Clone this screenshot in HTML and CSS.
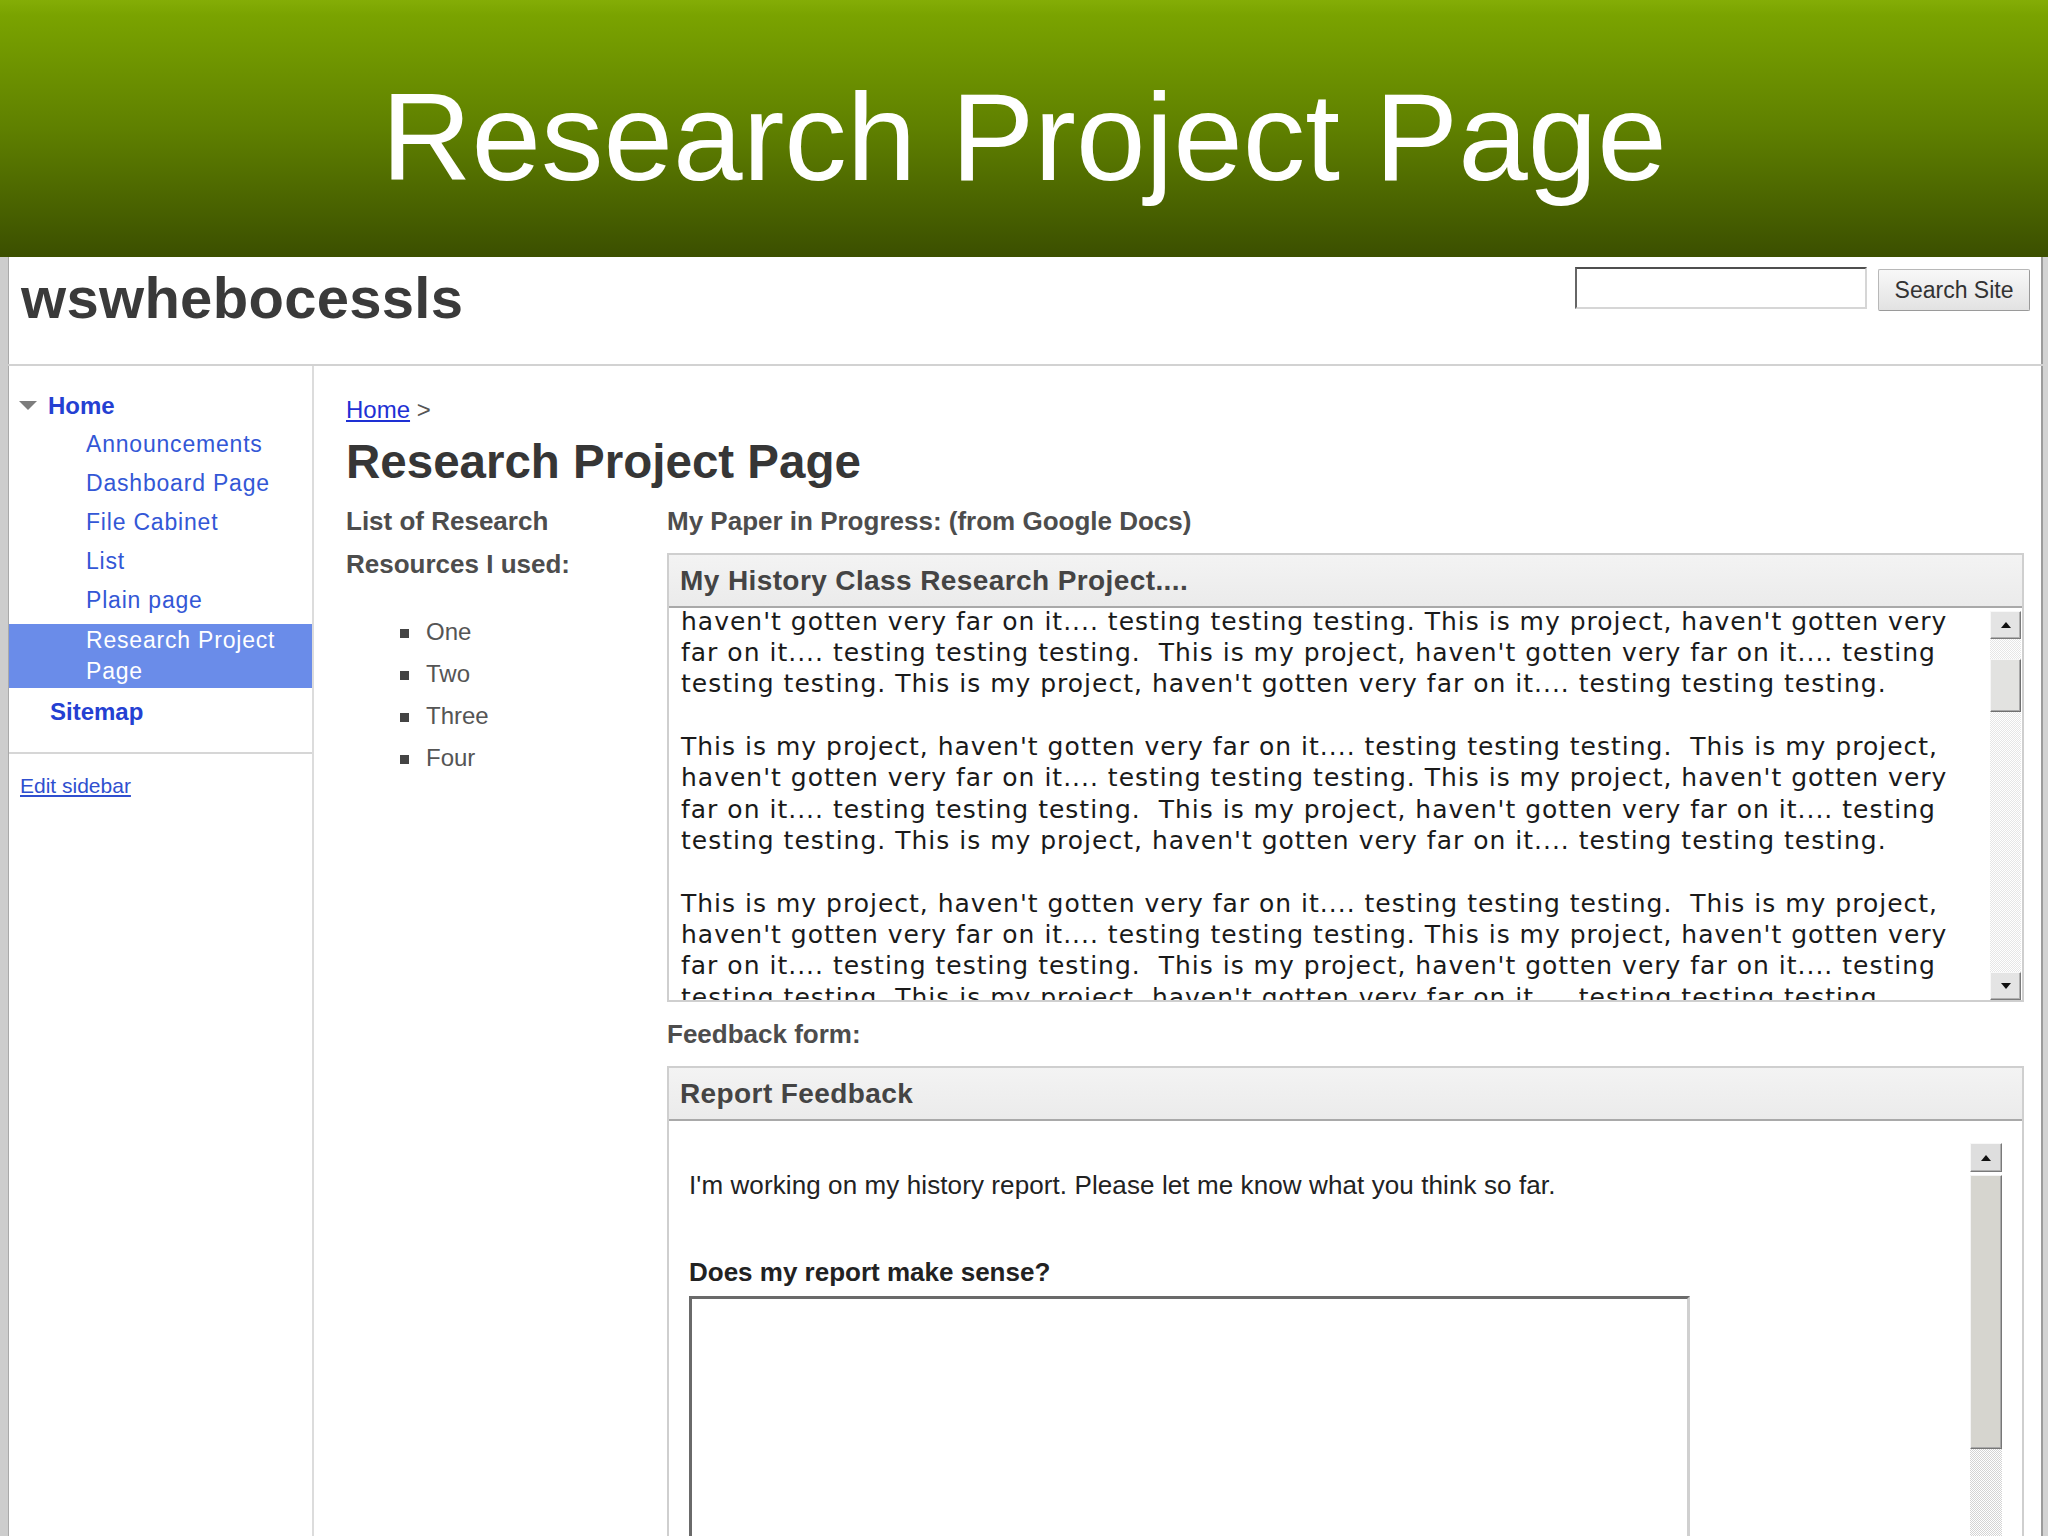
FILE: index.html
```html
<!DOCTYPE html>
<html lang="en">
<head>
<meta charset="utf-8">
<title>Research Project Page</title>
<link rel="stylesheet" href="styles.css">
</head>
<body>
<div class="banner"><h1 class="banner-title">Research Project Page</h1></div>
<div class="frame">
  <header class="site-header">
    <div class="site-title">wswhebocessls</div>
    <div class="search">
      <input class="search-input" type="text" value="">
      <button class="search-btn" type="button">Search Site</button>
    </div>
  </header>
  <div class="columns">
    <aside class="sidebar">
      <ul class="nav">
        <li class="nav-item nav-home"><span class="tri"></span><a class="nav-top">Home</a></li>
        <li class="nav-item nav-sub"><a>Announcements</a></li>
        <li class="nav-item nav-sub"><a>Dashboard Page</a></li>
        <li class="nav-item nav-sub"><a>File Cabinet</a></li>
        <li class="nav-item nav-sub"><a>List</a></li>
        <li class="nav-item nav-sub"><a>Plain page</a></li>
        <li class="nav-item nav-sub nav-current"><a>Research Project<br>Page</a></li>
        <li class="nav-item nav-site"><a class="nav-top">Sitemap</a></li>
      </ul>
      <div class="edit-sidebar"><a>Edit sidebar</a></div>
    </aside>
    <main class="main">
      <div class="crumb"><a class="crumb-link">Home</a> &gt;</div>
      <h2 class="page-title">Research Project Page</h2>
      <div class="content">
        <div class="col-left">
          <p class="label">List of Research Resources I used:</p>
          <ul class="bullets">
            <li>One</li>
            <li>Two</li>
            <li>Three</li>
            <li>Four</li>
          </ul>
        </div>
        <div class="col-right">
          <p class="label">My Paper in Progress: (from Google Docs)</p>
          <div class="gadget">
            <div class="gadget-head">My History Class Research Project....</div>
            <div class="doc-body">
              <div class="doc-view">
                <div class="doc-text">
                  <div class="ln">haven't gotten very far on it.... testing testing testing. This is my project, haven't gotten very</div>
                  <div class="ln">far on it.... testing testing testing.  This is my project, haven't gotten very far on it.... testing</div>
                  <div class="ln">testing testing. This is my project, haven't gotten very far on it.... testing testing testing.</div>
                  <div class="ln"> </div>
                  <div class="ln">This is my project, haven't gotten very far on it.... testing testing testing.  This is my project,</div>
                  <div class="ln">haven't gotten very far on it.... testing testing testing. This is my project, haven't gotten very</div>
                  <div class="ln">far on it.... testing testing testing.  This is my project, haven't gotten very far on it.... testing</div>
                  <div class="ln">testing testing. This is my project, haven't gotten very far on it.... testing testing testing.</div>
                  <div class="ln"> </div>
                  <div class="ln">This is my project, haven't gotten very far on it.... testing testing testing.  This is my project,</div>
                  <div class="ln">haven't gotten very far on it.... testing testing testing. This is my project, haven't gotten very</div>
                  <div class="ln">far on it.... testing testing testing.  This is my project, haven't gotten very far on it.... testing</div>
                  <div class="ln">testing testing. This is my project, haven't gotten very far on it.... testing testing testing.</div>
                </div>
              </div>
              <div class="vscroll doc-scroll">
                <div class="sb-btn"><span class="arrow-up"></span></div>
                <div class="sb-gap doc-gap1"></div>
                <div class="sb-thumb doc-thumb"></div>
                <div class="sb-gap sb-fill"></div>
                <div class="sb-btn"><span class="arrow-down"></span></div>
              </div>
            </div>
          </div>
          <p class="label label-fb">Feedback form:</p>
          <div class="gadget gadget-fb">
            <div class="gadget-head">Report Feedback</div>
            <div class="fb-body">
              <div class="fb-content">
                <p class="fb-intro">I'm working on my history report. Please let me know what you think so far.</p>
                <p class="fb-q">Does my report make sense?</p>
                <textarea class="fb-area"></textarea>
              </div>
              <div class="vscroll fb-scroll">
                <div class="sb-btn sb-btn-fb"><span class="arrow-up"></span></div>
                <div class="sb-thumb fb-thumb"></div>
                <div class="sb-gap sb-fill"></div>
              </div>
            </div>
          </div>
        </div>
      </div>
    </main>
  </div>
</div>
</body>
</html>
```
FILE: styles.css
```css
* { box-sizing: border-box; }
html, body {
  margin: 0;
  padding: 0;
  width: 2048px;
  height: 1536px;
  overflow: hidden;
  background: #ffffff;
  font-family: "Liberation Sans", Arial, sans-serif;
}
a { cursor: pointer; }
p { margin: 0; }
ul { margin: 0; padding: 0; list-style: none; }

.banner {
  height: 257px;
  background: linear-gradient(to bottom, #84ad06 0%, #7aa300 6%, #5f8000 50%, #3b4f00 100%);
  padding-top: 74px;
}
.banner-title {
  margin: 0;
  text-align: center;
  color: #ffffff;
  font-weight: normal;
  font-size: 125px;
  line-height: 125px;
  font-family: "Liberation Sans", Arial, sans-serif;
}

.frame {
  height: 1279px;
  overflow: hidden;
  border-left: 8px solid #cdcdcd;
  border-right: 5px solid #d3d3d3;
  box-shadow: inset 1px 0 0 #a9a9a9, inset -2px 0 0 #9c9c9c;
  display: flex;
  flex-direction: column;
}

.site-header {
  height: 109px;
  flex: none;
  border-bottom: 2px solid #d2d2d2;
  display: flex;
  justify-content: space-between;
  align-items: flex-start;
  padding: 8px 13px 0 13px;
}
.site-title {
  font-size: 58px;
  line-height: 66px;
  font-weight: bold;
  letter-spacing: 0.3px;
  color: #3a3a3a;
}
.search {
  display: flex;
  align-items: flex-start;
  gap: 11px;
  padding-top: 2px;
}
.search-input {
  width: 292px;
  height: 42px;
  margin: 0;
  border: 2px solid;
  border-color: #4f4f4f #d6d6d6 #d6d6d6 #666666;
  background: #fff;
}
.search-btn {
  width: 152px;
  height: 42px;
  margin: 2px 0 0 0;
  padding: 0;
  font-family: "Liberation Sans", Arial, sans-serif;
  font-size: 23px;
  color: #333;
  background: linear-gradient(to bottom, #f8f8f8, #e2e2e2);
  border: 1px solid #b8b8b8;
  border-right-color: #9a9a9a;
  border-bottom-color: #9a9a9a;
  border-radius: 2px;
}

.columns {
  flex: 1;
  display: flex;
  min-height: 0;
}

.sidebar {
  width: 305px;
  flex: none;
  border-right: 2px solid #dcdcdc;
  margin-left: 1px;
}
.nav {
  padding: 20px 0 20px 0;
  border-bottom: 2px solid #d6d6d6;
}
.nav-item {
  padding-top: 4px;
  padding-bottom: 4px;
  line-height: 31px;
  font-size: 23px;
}
.nav-item a { color: #3357d6; letter-spacing: 0.8px; }
.nav-item .nav-top { color: #2440d2; font-weight: bold; font-size: 24px; letter-spacing: 0; }
.nav-home { display: flex; align-items: center; padding-left: 10px; }
.tri {
  width: 0;
  height: 0;
  border-left: 9px solid transparent;
  border-right: 9px solid transparent;
  border-top: 9px solid #7d7d7d;
  margin-right: 11px;
}
.nav-sub { padding-left: 77px; }
.nav-current {
  background: #6a8ce9;
  margin: 4px 0;
  padding-top: 1px;
  padding-bottom: 1px;
}
.nav-current a { color: #ffffff; }
.nav-site { padding-left: 41px; }
.edit-sidebar {
  padding: 20px 0 0 11px;
  line-height: 24px;
  font-size: 21px;
}
.edit-sidebar a { color: #2f4fcf; text-decoration: underline; }

.main {
  flex: 1;
  padding: 29px 19px 0 32px;
  min-width: 0;
}
.crumb {
  line-height: 30px;
  font-size: 24px;
  color: #555;
}
.crumb-link { color: #1e30d4; text-decoration: underline; }
.page-title {
  margin: 9px 0 0 0;
  font-size: 47.5px;
  line-height: 56px;
  font-weight: bold;
  color: #363636;
}
.content {
  display: flex;
  margin-top: 10px;
}
.col-left {
  width: 321px;
  flex: none;
}
.col-right {
  flex: 1;
  min-width: 0;
}
.label {
  font-size: 26px;
  line-height: 43px;
  font-weight: bold;
  color: #4d4d4d;
}
.bullets {
  margin-top: 25px;
  padding-left: 54px;
}
.bullets li {
  font-size: 24px;
  line-height: 42px;
  color: #555;
  display: flex;
  align-items: center;
}
.bullets li::before {
  content: "";
  width: 9px;
  height: 9px;
  background: #444;
  margin-right: 17px;
  margin-top: 3px;
}

.gadget {
  margin-top: 10px;
  border: 2px solid #cfcfcf;
  background: #fff;
}
.gadget-head {
  height: 53px;
  line-height: 52px;
  padding-left: 11px;
  background: linear-gradient(to bottom, #f3f3f3, #ebebeb);
  border-bottom: 2px solid #a9a9a9;
  font-size: 28px;
  font-weight: bold;
  letter-spacing: 0.4px;
  color: #444;
}
.doc-body {
  height: 392px;
  display: flex;
}
.doc-view {
  flex: 1;
  overflow: hidden;
  padding-left: 12px;
}
.doc-text {
  margin-top: -2.5px;
  font-family: "DejaVu Sans", Verdana, sans-serif;
  font-size: 25px;
  letter-spacing: 1px;
  line-height: 31.35px;
  color: #1a1a1a;
}
.ln {
  white-space: pre;
  height: 31.35px;
}
.vscroll {
  flex: none;
  display: flex;
  flex-direction: column;
}
.doc-scroll {
  width: 31px;
  margin-right: 1px;
  padding-top: 3px;
}
.sb-btn {
  height: 28px;
  flex: none;
  background: #e4e4e4;
  border: 1px solid;
  border-color: #f8f8f8 #7a7a7a #7a7a7a #f8f8f8;
  box-shadow: inset -1px -1px 0 #b0b0b0;
  display: flex;
  align-items: center;
  justify-content: center;
}
.sb-btn-fb { height: 29px; background: #dedede; }
.arrow-up {
  width: 0; height: 0;
  border-left: 5px solid transparent;
  border-right: 5px solid transparent;
  border-bottom: 6px solid #111;
}
.arrow-down {
  width: 0; height: 0;
  border-left: 5px solid transparent;
  border-right: 5px solid transparent;
  border-top: 6px solid #111;
}
.sb-gap {
  background: repeating-conic-gradient(#e6e6e6 0 25%, #ffffff 0 50%) 0 0 / 2px 2px;
}
.doc-gap1 { height: 20px; flex: none; }
.sb-fill { flex: 1; }
.sb-thumb {
  flex: none;
  background: #e2e2e0;
  border: 1px solid;
  border-color: #f6f6f6 #6f6f6f #6f6f6f #f6f6f6;
  box-shadow: inset -1px -1px 0 #a8a8a8;
}
.doc-thumb { height: 53px; }

.label-fb { margin-top: 11px; }
.gadget-fb { height: 520px; }
.fb-body {
  display: flex;
  padding: 22px 20px 0 20px;
  height: 470px;
}
.fb-content {
  flex: 1;
  padding-top: 27px;
}
.fb-intro {
  font-size: 26px;
  line-height: 30px;
  letter-spacing: 0.1px;
  color: #222;
}
.fb-q {
  margin-top: 57px;
  font-size: 26px;
  line-height: 30px;
  font-weight: bold;
  color: #222;
}
.fb-area {
  display: block;
  margin-top: 9px;
  width: 1001px;
  height: 400px;
  border: 3px solid;
  border-color: #6a6a6a #d0d0d0 #d0d0d0 #6a6a6a;
  background: #fff;
  resize: none;
}
.fb-scroll {
  width: 32px;
}
.fb-thumb {
  height: 274px;
  margin-top: 3px;
  background: #d6d5cf;
  border-color: #f4f4f4 #777 #777 #f4f4f4;
}
.fb-scroll .sb-gap {
  background: repeating-conic-gradient(#d4d4d4 0 25%, #ffffff 0 50%) 0 0 / 2px 2px;
}
```
